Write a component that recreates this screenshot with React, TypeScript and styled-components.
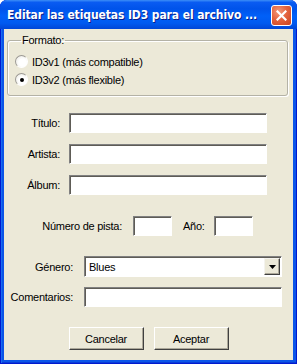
import React from "react";
import styled, { createGlobalStyle } from "styled-components";

const GlobalStyle = createGlobalStyle`
  body {
    margin: 0;
    background: #ffffff;
  }
  * {
    box-sizing: border-box;
  }
`;

const Window = styled.div`
  width: 297px;
  height: 364px;
  display: flex;
  flex-direction: column;
  padding: 0 4px 4px 4px;
  background: #0b55e8;
  border-radius: 7px 7px 0 0;
  box-shadow: inset 1px 0 #0019cf, inset -1px 0 #0019cf, inset 0 -1px #0019cf,
    inset 2px 0 #1a6cf0, inset 0 -2px #0a3bd8;
  font-family: "Liberation Sans", Arial, sans-serif;
  font-size: 11px;
  letter-spacing: -0.25px;
  color: #000;
`;

const TitleBar = styled.div`
  height: 29px;
  margin: 0 -4px;
  padding: 0 5px 0 7px;
  display: flex;
  align-items: center;
  gap: 6px;
  border-radius: 7px 7px 0 0;
  background: linear-gradient(
    to bottom,
    #3d8ff7 0%,
    #0a5cf2 8%,
    #0053ea 30%,
    #0060f8 55%,
    #005af0 80%,
    #0046d6 100%
  );
`;

const Title = styled.div`
  flex: 1;
  color: #ffffff;
  font-family: "DejaVu Sans Condensed", "DejaVu Sans", sans-serif;
  font-stretch: condensed;
  font-weight: bold;
  font-size: 12px;
  letter-spacing: -0.1px;
  text-shadow: 1px 1px #0a1e8a;
  white-space: nowrap;
`;

const CloseButton = styled.div`
  width: 21px;
  height: 21px;
  flex-shrink: 0;
  margin-top: 1px;
  border: 1px solid #ffffff;
  border-radius: 3px;
  background: radial-gradient(circle at 35% 30%, #f29a7c 0%, #e4643f 45%, #c9421f 100%);
  display: flex;
  align-items: center;
  justify-content: center;
`;

const Client = styled.div`
  flex: 1;
  background: #ece9d8;
  display: flex;
  flex-direction: column;
  padding: 5px 5px 0 3px;
`;

const GroupBox = styled.fieldset`
  margin: 0;
  padding: 8px 0 6px 7px;
  height: 62px;
  border: 1px solid #b4b2a6;
  border-radius: 3px;
  box-shadow: inset 1px 1px #ffffff, 1px 1px #ffffff;
  display: flex;
  flex-direction: column;
  gap: 5px;
`;

const Legend = styled.legend`
  padding: 0 1px;
  margin-left: 6px;
  line-height: 13px;
`;

const RadioRow = styled.label`
  display: flex;
  align-items: center;
  gap: 4px;
  height: 13px;
`;

const RadioDot = styled.span<{ $checked?: boolean }>`
  width: 13px;
  height: 13px;
  border-radius: 50%;
  border: 1px solid;
  border-color: #9c9a94 #ffffff #ffffff #9c9a94;
  background: radial-gradient(circle at 60% 60%, #ffffff 40%, #e6e4dc 100%);
  display: flex;
  align-items: center;
  justify-content: center;
  &::after {
    content: "";
    width: 4px;
    height: 4px;
    border-radius: 50%;
    background: #000;
    display: ${(p) => (p.$checked ? "block" : "none")};
  }
`;

const FieldGrid = styled.div`
  margin-top: 17px;
  display: grid;
  grid-template-columns: 50px 198px;
  column-gap: 9px;
  row-gap: 11px;
  align-items: center;
  padding-left: 3px;
`;

const Label = styled.span`
  text-align: right;
  white-space: nowrap;
`;

const TextBox = styled.div`
  height: 20px;
  width: 100%;
  background: #ffffff;
  border: 1px solid;
  border-color: #808080 #ffffff #ffffff #808080;
  box-shadow: inset 1px 1px #5e5c56;
`;

const TrackRow = styled.div`
  margin-top: 21px;
  display: grid;
  grid-template-columns: 80px 39px 20px 39px;
  column-gap: 11px;
  align-items: center;
  padding-left: 35px;
`;

const LowerGrid = styled.div`
  margin-top: 20px;
  display: grid;
  grid-template-columns: 66px 198px;
  column-gap: 11px;
  row-gap: 10px;
  align-items: center;
`;

const ComboBox = styled.div`
  height: 21px;
  background: #ffffff;
  border: 1px solid;
  border-color: #808080 #ffffff #ffffff #808080;
  box-shadow: inset 1px 1px #5e5c56;
  display: flex;
  align-items: center;
  padding: 1px 1px 1px 4px;
`;

const ComboText = styled.span`
  flex: 1;
`;

const DropButton = styled.div`
  width: 16px;
  height: 17px;
  background: #ece9d8;
  border: 1px solid;
  border-color: #f4f3ee #404040 #404040 #f4f3ee;
  box-shadow: inset -1px -1px #aca899;
  display: flex;
  align-items: center;
  justify-content: center;
`;

const ButtonRow = styled.div`
  margin-top: 20px;
  display: flex;
  justify-content: center;
  gap: 10px;
  padding-left: 2px;
`;

const PushButton = styled.button`
  width: 75px;
  height: 23px;
  padding: 0;
  font-family: "Liberation Sans", Arial, sans-serif;
  font-size: 11px;
  letter-spacing: -0.25px;
  color: #000;
  background: #ece9d8;
  border: 1px solid;
  border-color: #ffffff #404040 #404040 #ffffff;
  box-shadow: inset -1px -1px #aca899;
`;

export default function App() {
  return (
    <>
      <GlobalStyle />
      <Window>
        <TitleBar>
          <Title>Editar las etiquetas ID3 para el archivo ...</Title>
          <CloseButton>
            <svg width="11" height="11" viewBox="0 0 11 11">
              <path d="M1.5 1.5 L9.5 9.5 M9.5 1.5 L1.5 9.5" stroke="#fff" strokeWidth="2.2" strokeLinecap="square" />
            </svg>
          </CloseButton>
        </TitleBar>
        <Client>
          <GroupBox>
            <Legend>Formato:</Legend>
            <RadioRow>
              <RadioDot />
              ID3v1 (más compatible)
            </RadioRow>
            <RadioRow>
              <RadioDot $checked />
              ID3v2 (más flexible)
            </RadioRow>
          </GroupBox>

          <FieldGrid>
            <Label>Título:</Label>
            <TextBox />
            <Label>Artista:</Label>
            <TextBox />
            <Label>Álbum:</Label>
            <TextBox />
          </FieldGrid>

          <TrackRow>
            <Label>Número de pista:</Label>
            <TextBox />
            <Label>Año:</Label>
            <TextBox />
          </TrackRow>

          <LowerGrid>
            <Label>Género:</Label>
            <ComboBox>
              <ComboText>Blues</ComboText>
              <DropButton>
                <svg width="7" height="4" viewBox="0 0 7 4">
                  <path d="M0 0 H7 L3.5 4 Z" fill="#000" />
                </svg>
              </DropButton>
            </ComboBox>
            <Label>Comentarios:</Label>
            <TextBox />
          </LowerGrid>

          <ButtonRow>
            <PushButton>Cancelar</PushButton>
            <PushButton>Aceptar</PushButton>
          </ButtonRow>
        </Client>
      </Window>
    </>
  );
}
